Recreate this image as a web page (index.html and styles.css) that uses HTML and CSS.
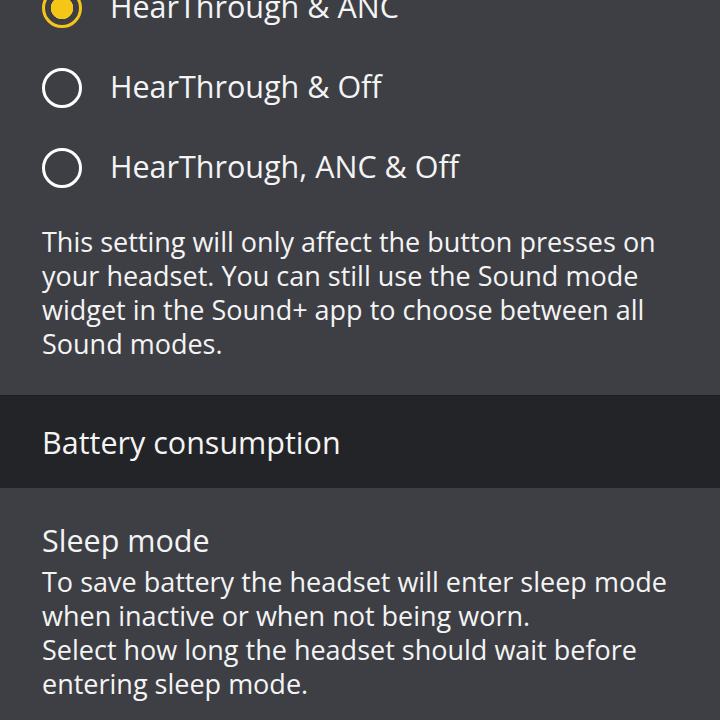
FILE: index.html
```html
<!DOCTYPE html>
<html lang="en">
<head>
  <meta charset="UTF-8" />
  <meta name="viewport" content="width=device-width, initial-scale=1" />
  <title>Sound mode settings</title>
  <link rel="stylesheet" href="styles.css">
</head>
<body>

<section class="modes">
  <ul class="options">
    <li class="option selected"><span class="radio"></span><span>HearThrough &amp; ANC</span></li>
    <li class="option"><span class="radio"></span><span>HearThrough &amp; Off</span></li>
    <li class="option"><span class="radio"></span><span>HearThrough, ANC &amp; Off</span></li>
  </ul>
  <p class="note">This setting will only affect the button presses on your headset. You can still use the Sound mode widget in the Sound+ app to choose between all Sound modes.</p>
</section>

<h2 class="band">Battery consumption</h2>

<section class="sleep">
  <h3>Sleep mode</h3>
  <p class="note">To save battery the headset will enter sleep mode when inactive or when not being worn.<br>Select how long the headset should wait before entering sleep mode.</p>
</section>

</body>
</html>
```

FILE: styles.css
```css
body {
  margin: 0;
  background-color: #3e3f44;
  color: #f4f4f4;
  font-family: "Open Sans", sans-serif;
  overflow: hidden;
}
.options {
  list-style: none;
  margin: -32px 0 0 0;
  padding: 0;
}
.option {
  display: flex;
  align-items: center;
  gap: 28px;
  height: 80px;
  padding-left: 42px;
  font-size: 30.5px;
  line-height: 40px;
}
.option span:last-child {
  margin-top: -5px;
}
.radio {
  box-sizing: border-box;
  width: 40px;
  height: 40px;
  border: 3px solid #fff;
  border-radius: 50%;
  flex-shrink: 0;
}
.option.selected .radio {
  border-color: #f5c518;
  background: radial-gradient(circle, #f5c518 0 11px, transparent 11.5px);
}
.note {
  margin: 0;
  font-size: 27px;
  line-height: 34px;
  padding: 0 42px;
}
.modes .note {
  margin-top: 17px;
  padding-bottom: 34px;
}
.band {
  margin: 0;
  height: 93px;
  box-sizing: border-box;
  display: flex;
  align-items: center;
  padding-left: 42px;
  background-color: #232427;
  border-top: 1px solid #1d1e20;
  font-size: 30.5px;
  font-weight: normal;
}
.sleep h3 {
  margin: 0;
  padding: 32px 42px 0;
  font-size: 30.5px;
  font-weight: normal;
  line-height: 40px;
}
.sleep .note {
  margin-top: 5px;
}
```
